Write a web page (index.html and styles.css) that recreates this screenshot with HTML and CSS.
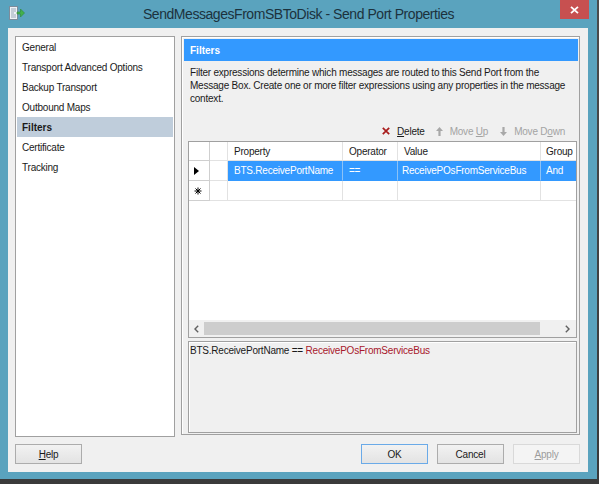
FILE: index.html
```html
<!DOCTYPE html>
<html>
<head>
<meta charset="utf-8">
<link rel="stylesheet" href="styles.css">
</head>
<body>
<div class="win">
  <div class="titlebar">
    <div class="ticon">
      <svg width="16" height="15" viewBox="0 0 16 15">
        <rect x="0.5" y="0.5" width="8" height="13" fill="#eef2f6" stroke="#7d8c9b"/>
        <path d="M2 3h5M2 5h5M2 7h3M2 9h5M2 11h5" stroke="#98a8b8" stroke-width="1"/>
        <path d="M8 6h3.5V3l4 4-4 4V8H8z" fill="#43b04c" stroke="#2c8a35" stroke-width="0.6"/>
      </svg>
    </div>
    <div class="ttitle">SendMessagesFromSBToDisk - Send Port Properties</div>
    <div class="tclose">
      <svg width="9" height="8" viewBox="0 0 9 8"><path d="M1 0.8L8 7.2M8 0.8L1 7.2" stroke="#fff" stroke-width="1.8"/></svg>
    </div>
  </div>
  <div class="client">
    <div class="main">
      <div class="nav">
        <div class="nav-item">General</div>
        <div class="nav-item">Transport Advanced Options</div>
        <div class="nav-item">Backup Transport</div>
        <div class="nav-item">Outbound Maps</div>
        <div class="nav-item sel">Filters</div>
        <div class="nav-item">Certificate</div>
        <div class="nav-item">Tracking</div>
      </div>
      <div class="pane">
        <div class="phead">Filters</div>
        <div class="desc">Filter expressions determine which messages are routed to this Send Port from the<br>Message Box. Create one or more filter expressions using any properties in the message<br>context.</div>
        <div class="toolbar">
          <div class="tb">
            <svg width="8" height="8" viewBox="0 0 8 8"><path d="M0.8 0.8L7.2 7.2M7.2 0.8L0.8 7.2" stroke="#a81c1c" stroke-width="1.7"/></svg>
            <span><u>D</u>elete</span>
          </div>
          <div class="tb dis up">
            <svg width="7" height="9" viewBox="0 0 7 9"><path d="M3.5 0L7 4H4.6V9H2.4V4H0Z" fill="#a8a8a8"/></svg>
            <span>Move <u>U</u>p</span>
          </div>
          <div class="tb dis down">
            <svg width="7" height="9" viewBox="0 0 7 9"><path d="M3.5 9L7 5H4.6V0H2.4V5H0Z" fill="#a8a8a8"/></svg>
            <span>Move D<u>o</u>wn</span>
          </div>
        </div>
        <div class="grid">
          <div class="grow hdr">
            <div class="cell rh"></div>
            <div class="cell"></div>
            <div class="cell">Property</div>
            <div class="cell">Operator</div>
            <div class="cell">Value</div>
            <div class="cell">Group</div>
          </div>
          <div class="grow sel">
            <div class="cell rh">
              <svg width="5" height="8" viewBox="0 0 5 8"><path d="M0 0L5 4L0 8Z" fill="#000"/></svg>
            </div>
            <div class="cell"></div>
            <div class="cell data">BTS.ReceivePortName</div>
            <div class="cell data">==</div>
            <div class="cell data">ReceivePOsFromServiceBus</div>
            <div class="cell data">And</div>
          </div>
          <div class="grow">
            <div class="cell rh">
              <svg width="8" height="8" viewBox="0 0 8 8"><path d="M4 0.5V7.5M0.5 4H7.5M1.5 1.5L6.5 6.5M6.5 1.5L1.5 6.5" stroke="#000" stroke-width="1"/></svg>
            </div>
            <div class="cell"></div>
            <div class="cell"></div>
            <div class="cell"></div>
            <div class="cell"></div>
            <div class="cell"></div>
          </div>
          <div class="gfill"></div>
          <div class="hscroll">
            <div class="sarrow">
              <svg width="5" height="8" viewBox="0 0 5 8"><path d="M4.2 0.8L1 4L4.2 7.2" fill="none" stroke="#606060" stroke-width="1.4"/></svg>
            </div>
            <div class="sthumb"></div>
            <div class="sspace"></div>
            <div class="sarrow r">
              <svg width="5" height="8" viewBox="0 0 5 8"><path d="M0.8 0.8L4 4L0.8 7.2" fill="none" stroke="#606060" stroke-width="1.4"/></svg>
            </div>
          </div>
        </div>
        <div class="expr">BTS.ReceivePortName == <span class="red">ReceivePOsFromServiceBus</span></div>
      </div>
    </div>
    <div class="btns">
      <div class="btn"><span><u>H</u>elp</span></div>
      <div class="btn def push">OK</div>
      <div class="btn">Cancel</div>
      <div class="btn dis"><span><u>A</u>pply</span></div>
    </div>
  </div>
</div>
</body>
</html>
```
FILE: styles.css
```css
* { box-sizing: border-box; }
html, body { margin: 0; padding: 0; }
body {
  width: 599px;
  height: 484px;
  overflow: hidden;
  background: linear-gradient(#4c4c4c, #3a3a3a);
  font-family: "Liberation Sans", Arial, sans-serif;
  font-size: 10px;
  letter-spacing: -0.22px;
  color: #1a1a1a;
}
.win {
  width: 597px;
  height: 479px;
  background: #5aa3be;
  display: flex;
  flex-direction: column;
}
.titlebar {
  height: 28px;
  display: grid;
  grid-template-columns: 1fr auto 1fr;
}
.ticon { margin: 6px 0 0 9px; height: 15px; }
.ticon svg { display: block; }
.ttitle {
  font-size: 14px;
  letter-spacing: -0.45px;
  line-height: 28px;
  color: #1c323d;
  white-space: nowrap;
}
.tclose {
  justify-self: end;
  width: 29px;
  height: 19px;
  margin-right: 8px;
  background: #c75050;
  display: flex;
  align-items: center;
  justify-content: center;
}
.client {
  margin: 0 9px 0 8px;
  height: 444px;
  background: #f0f0f0;
  padding: 8px 8px 8px 7px;
  display: flex;
  flex-direction: column;
  gap: 7px;
}
.main { display: flex; gap: 6px; height: 401px; }
.nav {
  width: 160px;
  height: 401px;
  background: #fff;
  border: 1px solid #a0a0a0;
  padding: 0 1px;
}
.nav-item {
  height: 20px;
  line-height: 21px;
  padding-left: 5px;
  white-space: nowrap;
}
.nav-item.sel { background: #bfcddb; font-weight: bold; letter-spacing: 0; }
.pane {
  width: 399px;
  height: 399px;
  border: 1px solid #a0a0a0;
  box-shadow: inset 1px 1px 0 #fff;
  padding: 2px 1px 0 2px;
  display: flex;
  flex-direction: column;
}
.phead {
  height: 22px;
  background: #3399ff;
  color: #fff;
  font-weight: bold;
  letter-spacing: 0;
  line-height: 23px;
  padding-left: 6px;
}
.desc {
  margin: 5px 0 0 6px;
  line-height: 13px;
  height: 39px;
  white-space: nowrap;
}
.toolbar {
  margin-top: 16px;
  height: 20px;
  display: flex;
  justify-content: flex-end;
  align-items: center;
  padding-right: 13px;
}
.tb { display: flex; align-items: center; gap: 7px; white-space: nowrap; }
.tb svg { display: block; }
.tb.up { margin-left: 11px; }
.tb.down { margin-left: 12px; }
.tb.dis { color: #a3a3a3; }
.grid {
  margin-left: 4px;
  width: 389px;
  height: 197px;
  border: 1px solid #a0a0a0;
  background: #fff;
  display: flex;
  flex-direction: column;
}
.grow {
  display: grid;
  grid-template-columns: 21px 18px 115px 55px 143px 1fr;
  height: 20px;
}
.grow.hdr { height: 19px; }
.cell {
  border-right: 1px solid #e2e2e2;
  border-bottom: 1px solid #e2e2e2;
  padding-left: 6px;
  line-height: 19px;
  white-space: nowrap;
  overflow: hidden;
}
.grow:not(.hdr) .cell { line-height: 20px; }
.grow .cell:last-child { border-right: none; padding-left: 5px; }
.cell.rh {
  padding: 0 0 0 5px;
  display: flex;
  align-items: center;
  justify-content: flex-start;
  border-right-color: #cfcfcf;
  border-bottom-color: #cfcfcf;
}
.grow.sel .data {
  background: #3399ff;
  color: #fff;
  border-right-color: #8cc2f6;
  border-bottom-color: #3399ff;
}
.grow.sel .data:nth-child(5) { padding-left: 4px; }
.gfill { flex: 1; }
.hscroll {
  height: 17px;
  background: #f0f0f0;
  display: flex;
  align-items: center;
}
.sarrow {
  width: 15px;
  height: 17px;
  display: flex;
  align-items: center;
  justify-content: center;
}
.sarrow svg { display: block; }
.sarrow.r { width: 17px; }
.sthumb { width: 336px; height: 13px; background: #cdcdcd; }
.sspace { flex: 1; }
.expr {
  margin: 3px 0 0 4px;
  width: 389px;
  height: 92px;
  border: 1px solid #a0a0a0;
  box-shadow: inset 1px 1px 0 #fff;
  padding: 2px 1px;
  line-height: 13px;
  white-space: nowrap;
}
.red { color: #a8182c; }
.btns { display: flex; height: 20px; gap: 9px; }
.btn {
  width: 67px;
  height: 20px;
  border: 1px solid #acacac;
  background: linear-gradient(#f2f2f2, #e3e3e3);
  display: flex;
  align-items: center;
  justify-content: center;
  white-space: nowrap;
}
.btn.push { margin-left: auto; }
.btn.def { border-color: #6aaae8; }
.btn.dis { border-color: #d9d9d9; background: #f4f4f4; color: #9c9c9c; }
```
